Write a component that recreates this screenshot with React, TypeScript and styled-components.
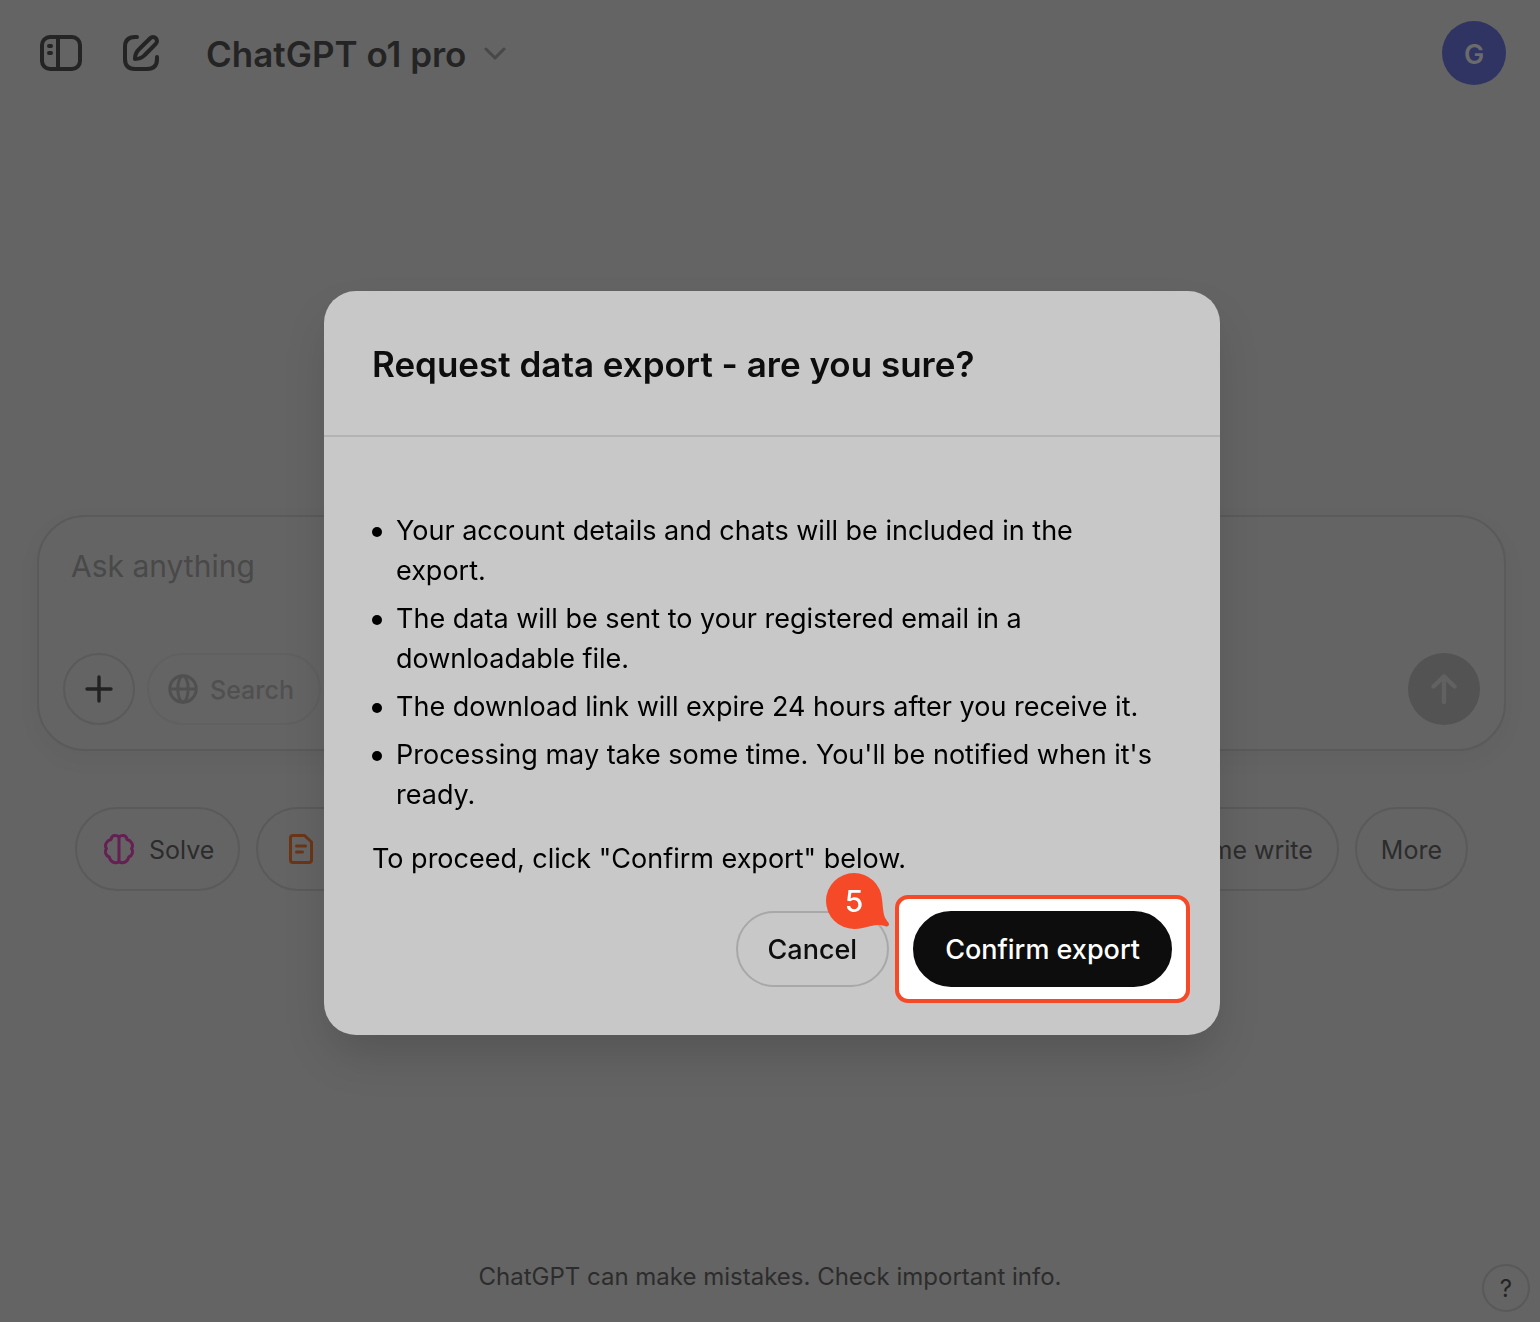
import React from "react";
import styled, { createGlobalStyle } from "styled-components";

const GlobalStyle = createGlobalStyle`
  *, *::before, *::after { box-sizing: border-box; }
  body {
    margin: 0;
    background: #646464;
    color: #242424;
    font-family: Inter, "Liberation Sans", sans-serif;
  }
  button, textarea { font: inherit; color: inherit; }
  button { cursor: pointer; }
`;

const Page = styled.div`
  display: flex;
  flex-direction: column;
  min-height: 100vh;
`;

const Header = styled.header`
  display: flex;
  align-items: center;
  padding: 21px 34px 0 40px;
`;

const IconButton = styled.button`
  display: flex;
  padding: 0;
  margin-right: 41px;
  border: 0;
  background: none;
`;

const ModelButton = styled.button`
  display: flex;
  align-items: center;
  gap: 18px;
  margin: 2px auto 0 6px;
  padding: 0;
  border: 0;
  background: none;
  font-size: 35px;
  line-height: 44px;
  font-weight: 600;
`;

const Avatar = styled.button`
  width: 64px;
  height: 64px;
  padding: 2px 0 0;
  border: 0;
  border-radius: 50%;
  background: #303463;
  color: #6b6b6b;
  font-size: 27px;
  font-weight: 600;
`;

const Main = styled.main`
  flex: 1;
  display: flex;
  flex-direction: column;
  justify-content: center;
  gap: 56px;
  padding: 66px 34px 0 37px;
`;

const Composer = styled.form`
  display: flex;
  flex-direction: column;
  justify-content: space-between;
  height: 236px;
  padding: 24px;
  border: 2px solid #5a5a5a;
  border-radius: 48px;
  box-shadow: 0 8px 24px rgba(0, 0, 0, 0.04);
`;

const Prompt = styled.textarea`
  height: 52px;
  padding: 3px 8px;
  border: 0;
  outline: 0;
  resize: none;
  background: none;
  font-size: 30px;
  line-height: 44px;
  overflow: hidden;
  &::placeholder { color: #494949; opacity: 1; }
`;

const Tools = styled.div`
  display: flex;
  gap: 12px;
`;

const RoundButton = styled.button<{ $filled?: boolean }>`
  display: flex;
  align-items: center;
  justify-content: center;
  width: 72px;
  height: 72px;
  padding: 0;
  margin-left: ${(p) => (p.$filled ? "auto" : "0")};
  border: ${(p) => (p.$filled ? "0" : "2px solid #5a5a5a")};
  border-radius: 50%;
  background: ${(p) => (p.$filled ? "#535353" : "none")};
  color: ${(p) => (p.$filled ? "#616161" : "#222222")};
`;

const SearchButton = styled.button`
  display: flex;
  align-items: center;
  gap: 12px;
  padding: 2px 25px 0 19px;
  border: 2px solid #606060;
  border-radius: 36px;
  background: none;
  color: #505050;
  font-size: 25px;
  font-weight: 500;
  svg { margin-bottom: 2px; }
`;

const Chips = styled.div`
  display: flex;
  gap: 16px;
  padding: 0 38px;
`;

const Chip = styled.button<{ $grow?: boolean }>`
  display: flex;
  align-items: center;
  flex: ${(p) => (p.$grow ? "1" : "none")};
  gap: 12px;
  height: 84px;
  padding: 2px 24px 0;
  border: 2px solid #5a5a5a;
  border-radius: 42px;
  background: none;
  color: #2c2c2c;
  font-size: 25px;
  white-space: nowrap;
  svg { margin-bottom: 2px; }
`;

const Footer = styled.footer`
  display: grid;
  grid-template-columns: 48px 1fr 48px;
  align-items: center;
  padding: 0 10px;
  height: 68px;
  margin-top: auto;
`;

const Disclaimer = styled.p`
  grid-column: 2;
  margin: 0 0 22px;
  text-align: center;
  color: #2c2c2c;
  font-size: 24px;
  line-height: 32px;
`;

const HelpButton = styled.button`
  width: 48px;
  height: 48px;
  padding: 0;
  border: 2px solid #595959;
  border-radius: 50%;
  background: none;
  font-size: 24px;
`;

const Backdrop = styled.div`
  position: fixed;
  inset: 0;
  display: flex;
  align-items: center;
  justify-content: center;
  padding: 4px 0 0 4px;
`;

const Dialog = styled.section`
  width: 896px;
  max-width: 100%;
  border-radius: 32px;
  background: #c8c8c8;
  color: #0d0d0d;
  box-shadow: 0 24px 48px -8px rgba(0, 0, 0, 0.17);
`;

const DialogHeader = styled.div`
  padding: 51px 48px 49px;
  border-bottom: 2px solid #b3b3b3;
`;

const DialogTitle = styled.h2`
  margin: 0;
  font-size: 35px;
  line-height: 44px;
  font-weight: 600;
`;

const DialogBody = styled.div`
  padding: 74px 48px 48px;
  color: #000000;
  font-size: 27px;
  line-height: 40px;
`;

const Terms = styled.ul`
  display: flex;
  flex-direction: column;
  gap: 8px;
  margin: 0;
  padding: 0 8px 0 0;
  list-style: none;
`;

const Term = styled.li`
  display: flex;
  gap: 14px;
  &::before {
    content: "";
    flex: none;
    width: 10px;
    height: 10px;
    margin-top: 16px;
    border-radius: 50%;
    background: #000000;
  }
`;

const Proceed = styled.p`
  margin: 24px 0 32px;
`;

const Actions = styled.div`
  display: flex;
  justify-content: flex-end;
  gap: 24px;
`;

const ActionButton = styled.button<{ $primary?: boolean }>`
  position: relative;
  height: 76px;
  padding: 2px 30px 0;
  border: 2px solid ${(p) => (p.$primary ? "#0d0d0d" : "#a8a8a8")};
  border-radius: 38px;
  background: ${(p) => (p.$primary ? "#0d0d0d" : "transparent")};
  color: ${(p) => (p.$primary ? "#ffffff" : "#0d0d0d")};
  font-weight: 500;
`;

const Spotlight = styled.div`
  position: relative;
  &::before {
    content: "";
    position: absolute;
    inset: -16px -18px;
    border: 4px solid #f54927;
    border-radius: 13px;
    background: #ffffff;
  }
`;

const StepMarker = styled.div`
  position: absolute;
  top: -38px;
  left: -87px;
  width: 64px;
  height: 56px;
  color: #ffffff;
  svg { position: absolute; inset: 0; }
  span {
    position: relative;
    display: block;
    width: 56px;
    text-align: center;
    font-size: 30px;
    line-height: 56px;
    font-weight: 500;
  }
`;

const SidebarIcon = () => (
  <svg width="42" height="36" viewBox="0 0 42 36" fill="none" stroke="currentColor" strokeWidth="4" strokeLinecap="round">
    <rect x="2" y="2" width="38" height="32" rx="8" />
    <path d="M18 3V33" strokeLinecap="butt" />
    <path d="M9 11H11M9 18H11" />
  </svg>
);

const ComposeIcon = () => (
  <svg width="36" height="36" viewBox="0 0 36 36" fill="none" stroke="currentColor" strokeWidth="4" strokeLinecap="round" strokeLinejoin="round">
    <path d="M14 2H12Q2 2 2 12V24Q2 34 12 34H24Q34 34 34 24V22" />
    <path d="M12 24C12 19 13 17 16 14.2L27.2 3.2A3.9 3.9 0 0 1 32.8 8.8L21.8 20C19 23 17 24 12 24Z" />
  </svg>
);

const ChevronIcon = () => (
  <svg width="22" height="14" viewBox="0 0 22 14" fill="none" stroke="#484848" strokeWidth="3" strokeLinecap="round" strokeLinejoin="round">
    <path d="M2 2L11 11L20 2" />
  </svg>
);

const PlusIcon = () => (
  <svg width="28" height="28" viewBox="0 0 28 28" stroke="currentColor" strokeWidth="3.4" strokeLinecap="round">
    <path d="M14 2V26M2 14H26" />
  </svg>
);

const GlobeIcon = () => (
  <svg width="30" height="30" viewBox="0 0 30 30" fill="none" stroke="currentColor" strokeWidth="3">
    <circle cx="15" cy="15" r="13.2" />
    <ellipse cx="15" cy="15" rx="5.2" ry="13" />
    <path d="M2 15H28" />
  </svg>
);

const ArrowUpIcon = () => (
  <svg width="26" height="30" viewBox="0 0 26 30" fill="none" stroke="currentColor" strokeWidth="4.4" strokeLinecap="round" strokeLinejoin="round">
    <path d="M2.5 12.5L13 2.4L23.5 12.5M13 3V28" />
  </svg>
);

const BrainIcon = () => (
  <svg width="36" height="36" viewBox="0 0 36 36" fill="none" stroke="#651f53" strokeWidth="3" strokeLinejoin="round">
    <path d="M18 6.500C16.500 3.600 10.500 3.600 10 8.500C5.500 9.500 3.200 14 5.400 17.500C3.200 20.500 4.500 24.500 8.200 26C10 32.500 16.500 33 18 29.800C19.500 33 26 32.500 27.800 26C31.500 24.500 32.800 20.500 30.600 17.500C32.800 14 30.500 9.500 26 8.500C25.500 3.600 19.500 3.600 18 6.500ZM18 6.500V30" />
  </svg>
);

const NoteIcon = () => (
  <svg width="36" height="36" viewBox="0 0 36 36" fill="none" stroke="#6b3518" strokeWidth="3" strokeLinecap="round" strokeLinejoin="round">
    <path d="M11 4.500H22.500L29.500 11V29Q29.500 31.500 27 31.500H11Q8.500 31.500 8.500 29V7Q8.500 4.500 11 4.500Z" />
    <path d="M14.500 15H23.500M14.500 21H20.500" />
  </svg>
);

const terms = [
  "Your account details and chats will be included in the export.",
  "The data will be sent to your registered email in a downloadable file.",
  "The download link will expire 24 hours after you receive it.",
  "Processing may take some time. You'll be notified when it's ready.",
];

export default function App() {
  return (
    <>
      <GlobalStyle />
      <Page>
        <Header>
          <IconButton aria-label="Open sidebar"><SidebarIcon /></IconButton>
          <IconButton aria-label="New chat"><ComposeIcon /></IconButton>
          <ModelButton>ChatGPT o1 pro <ChevronIcon /></ModelButton>
          <Avatar aria-label="Account">G</Avatar>
        </Header>
        <Main>
          <Composer onSubmit={(e) => e.preventDefault()}>
            <Prompt aria-label="Message" placeholder="Ask anything" />
            <Tools>
              <RoundButton type="button" aria-label="Attach"><PlusIcon /></RoundButton>
              <SearchButton type="button"><GlobeIcon />Search</SearchButton>
              <RoundButton $filled aria-label="Send"><ArrowUpIcon /></RoundButton>
            </Tools>
          </Composer>
          <Chips>
            <Chip><BrainIcon />Solve</Chip>
            <Chip $grow aria-label="Summarize text"><NoteIcon /></Chip>
            <Chip>Help me write</Chip>
            <Chip>More</Chip>
          </Chips>
        </Main>
        <Footer>
          <Disclaimer>ChatGPT can make mistakes. Check important info.</Disclaimer>
          <HelpButton aria-label="Help">?</HelpButton>
        </Footer>
      </Page>
      <Backdrop>
        <Dialog role="dialog" aria-modal="true" aria-labelledby="export-title">
          <DialogHeader>
            <DialogTitle id="export-title">Request data export - are you sure?</DialogTitle>
          </DialogHeader>
          <DialogBody>
            <Terms>
              {terms.map((term) => <Term key={term}>{term}</Term>)}
            </Terms>
            <Proceed>To proceed, click "Confirm export" below.</Proceed>
            <Actions>
              <ActionButton>Cancel</ActionButton>
              <Spotlight>
                <ActionButton $primary>Confirm export</ActionButton>
                <StepMarker>
                  <svg width="64" height="56" viewBox="0 0 64 56" aria-hidden="true">
                    <path fill="#f54927" d="M28 0A28 28 0 0 1 56 26C57 34 57 41 59.500 45.500Q61 48 62.300 49.500C64 51.500 62.500 54 60 53.500C56 51.800 51 51.500 45 53C39 54.500 34 56 28 56A28 28 0 0 1 28 0Z" />
                  </svg>
                  <span>5</span>
                </StepMarker>
              </Spotlight>
            </Actions>
          </DialogBody>
        </Dialog>
      </Backdrop>
    </>
  );
}
